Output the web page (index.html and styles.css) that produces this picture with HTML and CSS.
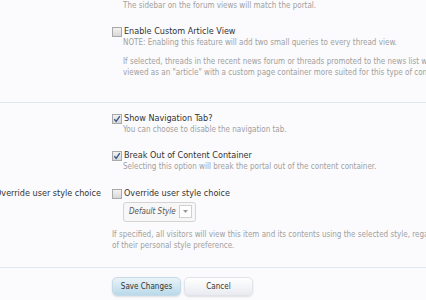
FILE: index.html
```html
<!DOCTYPE html>
<html lang="en">
<head>
    <meta charset="UTF-8">
    <title>Portal Options</title>
    <link rel="stylesheet" href="styles.css">
</head>
<body>
    <form class="options-form">
        <dl class="ctrl-unit">
            <dt></dt>
            <dd>
                <ul class="check-list">
                    <li>
                        <p class="hint first">The sidebar on the forum views will match the portal.</p>
                    </li>
                    <li>
                        <label class="check">
                            <svg class="box" width="10" height="10" viewBox="0 0 10 10"><rect x="0.5" y="0.5" width="9" height="9" fill="url(#boxfill)" stroke="#a9a9a9"/></svg>
                            Enable Custom Article View
                        </label>
                        <p class="hint">NOTE: Enabling this feature will add two small queries to every thread view.</p>
                        <p class="hint long">If selected, threads in the recent news forum or threads promoted to the news list will be<br>viewed as an "article" with a custom page container more suited for this type of content.</p>
                    </li>
                </ul>
            </dd>
        </dl>

        <dl class="ctrl-unit">
            <dt></dt>
            <dd>
                <ul class="check-list">
                    <li>
                        <label class="check">
                            <svg class="box" width="10" height="10" viewBox="0 0 10 10"><rect x="0.5" y="0.5" width="9" height="9" fill="url(#boxfill)" stroke="#a9a9a9"/><path d="M2.3 5.2 L4.2 7.4 L7.8 2.2" fill="none" stroke="#3b5b8c" stroke-width="1.4"/></svg>
                            Show Navigation Tab?
                        </label>
                        <p class="hint">You can choose to disable the navigation tab.</p>
                    </li>
                    <li>
                        <label class="check">
                            <svg class="box" width="10" height="10" viewBox="0 0 10 10"><rect x="0.5" y="0.5" width="9" height="9" fill="url(#boxfill)" stroke="#a9a9a9"/><path d="M2.3 5.2 L4.2 7.4 L7.8 2.2" fill="none" stroke="#3b5b8c" stroke-width="1.4"/></svg>
                            Break Out of Content Container
                        </label>
                        <p class="hint">Selecting this option will break the portal out of the content container.</p>
                    </li>
                </ul>
            </dd>
            <dt class="row-label">Override user style choice</dt>
            <dd>
                <label class="check">
                    <svg class="box" width="10" height="10" viewBox="0 0 10 10"><rect x="0.5" y="0.5" width="9" height="9" fill="url(#boxfill)" stroke="#a9a9a9"/></svg>
                    Override user style choice
                </label>
                <div class="select">
                    <span>Default Style</span>
                    <span class="arrow"><svg width="5" height="3" viewBox="0 0 5 3"><path d="M0 0 L5 0 L2.5 3 Z" fill="#999"/></svg></span>
                </div>
                <p class="explain">If specified, all visitors will view this item and its contents using the selected style, regardless<br>of their personal style preference.</p>
            </dd>
        </dl>

        <div class="submit-unit">
            <button type="button" class="button primary">Save Changes</button>
            <button type="button" class="button">Cancel</button>
        </div>

        <svg width="0" height="0" class="defs">
            <defs>
                <linearGradient id="boxfill" x1="0" y1="0" x2="0" y2="1">
                    <stop offset="0" stop-color="#f4f4f4"/>
                    <stop offset="1" stop-color="#d6d6d6"/>
                </linearGradient>
            </defs>
        </svg>
    </form>
</body>
</html>
```

FILE: styles.css
```css
html, body {
    margin: 0;
    padding: 0;
    background: #fbfbfd;
    overflow: hidden;
}

body {
    font-family: "DejaVu Sans Condensed", "DejaVu Sans", sans-serif;
    color: #333;
    width: 426px;
    height: 300px;
}

.options-form {
    margin-left: -60px;
    width: 700px;
}

.ctrl-unit {
    display: grid;
    grid-template-columns: 161px 1fr;
    column-gap: 11px;
    row-gap: 15px;
    margin: 0;
    border-bottom: 1px solid #dde9ee;
}

.ctrl-unit:first-child {
    padding-bottom: 24px;
}

.ctrl-unit + .ctrl-unit {
    padding: 9px 0 16px;
}

dt {
    margin: 0;
}

dd {
    margin: 0;
}

.row-label {
    text-align: right;
    font-size: 9px;
    line-height: 12px;
    white-space: nowrap;
}

.check-list {
    list-style: none;
    margin: 0;
    padding: 0;
}

.check-list li + li {
    margin-top: 14px;
}

.check {
    display: flex;
    align-items: center;
    gap: 2px;
    font-size: 9px;
    line-height: 12px;
    white-space: nowrap;
}

.box {
    flex: none;
    margin-top: 1px;
}

.hint {
    margin: 0;
    padding-left: 11px;
    font-size: 8px;
    line-height: 11px;
    color: #a0a0a0;
    white-space: nowrap;
}

.hint.long {
    margin-top: 8px;
}

.select {
    display: inline-flex;
    align-items: center;
    gap: 3px;
    margin: 2px 0 0 11px;
    height: 18px;
    padding: 0 3px 0 5px;
    border: 1px solid #d4d4d4;
    border-radius: 3px;
    background: #f7f7f8;
    font-size: 8px;
    font-style: italic;
    color: #555;
}

.select .arrow {
    display: flex;
    align-items: center;
    justify-content: center;
    width: 11px;
    height: 11px;
    border: 1px solid #d0d0d0;
    background: #fff;
}

.explain {
    margin: 7px 0 0;
    font-size: 8px;
    line-height: 11px;
    color: #a0a0a0;
    white-space: nowrap;
}

.submit-unit {
    padding: 9px 0 0 172px;
    display: flex;
    gap: 3px;
}

.button {
    width: 69px;
    height: 19px;
    padding: 0;
    border: 1px solid #e0e4ea;
    border-radius: 5px;
    background: linear-gradient(#ffffff, #e9ebf1);
    box-shadow: 0 1px 2px rgba(0, 0, 0, 0.12);
    font-family: "DejaVu Sans Condensed", "DejaVu Sans", sans-serif;
    font-size: 8px;
    color: #333;
}

.button.primary {
    border-color: #c6dbe7;
    background: linear-gradient(#eaf3f8, #b9d9ea);
}

.defs {
    position: absolute;
}
```
